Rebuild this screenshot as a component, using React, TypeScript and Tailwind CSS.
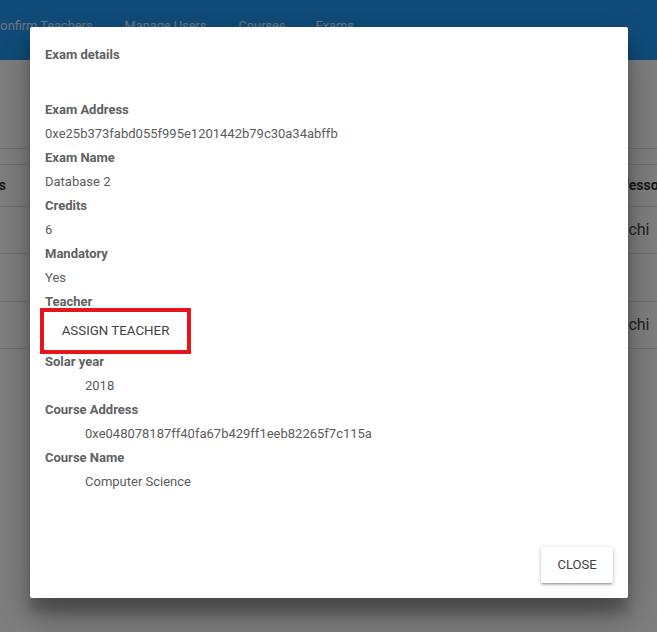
import React from 'react';

const font = { fontFamily: 'Roboto, "Liberation Sans", sans-serif' };

const rows = [
  { label: 'Exam Address', value: '0xe25b373fabd055f995e1201442b79c30a34abffb' },
  { label: 'Exam Name', value: 'Database 2' },
  { label: 'Credits', value: '6' },
  { label: 'Mandatory', value: 'Yes' },
];

const courseRows = [
  { label: 'Solar year', value: '2018' },
  { label: 'Course Address', value: '0xe048078187ff40fa67b429ff1eeb82265f7c115a' },
  { label: 'Course Name', value: 'Computer Science' },
];

const Label: React.FC<{ children: React.ReactNode }> = ({ children }) => (
  <div className="h-[24px] leading-[24px] text-[13px] font-bold text-[#616161]">{children}</div>
);

const Value: React.FC<{ children: React.ReactNode; indent?: boolean }> = ({ children, indent }) => (
  <div className={`h-[24px] leading-[24px] text-[13px] text-[#5c5c5c] ${indent ? 'pl-[40px]' : ''}`}>{children}</div>
);

const App: React.FC = () => {
  return (
    <div className="relative w-[657px] h-[632px] overflow-hidden bg-white" style={font}>
      {/* page behind the dialog */}
      <header className="h-[60px] bg-[#2196f3] flex items-start pt-[16px] text-[12.8px] leading-[20px] text-white/80 whitespace-nowrap">
        <span className="-ml-[8px] mr-[32px]">Confirm Teachers</span>
        <span className="mr-[32px]">Manage Users</span>
        <span className="mr-[30px]">Courses</span>
        <span>Exams</span>
      </header>
      <div className="pt-[88px]">
        <div className="border-t border-[#e0e0e0] h-[16px]" />
        <div className="flex items-center h-[42px] border-t border-[#e0e0e0] text-[14px] font-bold text-[#333]">
          <div className="w-[6px] overflow-hidden flex justify-end shrink-0"><span>Exams</span></div>
          <div className="flex-1" />
          <div className="w-[55px] shrink-0 overflow-hidden whitespace-nowrap">Professor</div>
        </div>
        <div className="flex items-center h-[47px] border-t border-[#e0e0e0] text-[16px] text-[#444]">
          <div className="flex-1" />
          <div className="w-[60px] shrink-0 overflow-hidden whitespace-nowrap">Bianchi</div>
        </div>
        <div className="h-[48px] border-t border-[#e0e0e0]" />
        <div className="flex items-center h-[47px] border-t border-[#e0e0e0] text-[16px] text-[#444]">
          <div className="flex-1" />
          <div className="w-[60px] shrink-0 overflow-hidden whitespace-nowrap">Bianchi</div>
        </div>
        <div className="border-t border-[#e0e0e0]" />
      </div>

      {/* overlay */}
      <div className="absolute inset-0 bg-black/50" />

      {/* dialog */}
      <div className="absolute left-[30px] top-[27px] w-[598px] h-[571px] bg-white rounded-[2px] shadow-[0_19px_38px_rgba(0,0,0,0.3),0_15px_12px_rgba(0,0,0,0.22)] flex flex-col">
        <div className="px-[15px] pt-[16px]">
          <div className="h-[24px] leading-[24px] text-[13px] font-bold text-[#616161]">Exam details</div>
        </div>
        <div className="px-[15px] pt-[31px] flex-1">
          {rows.map((r) => (
            <React.Fragment key={r.label}>
              <Label>{r.label}</Label>
              <Value>{r.value}</Value>
            </React.Fragment>
          ))}
          <div className="h-[22px] leading-[24px] text-[13px] font-bold text-[#616161]">Teacher</div>
          <div className="w-fit -ml-[1px] outline-4 outline-[#e8141c]">
            <button className="block h-[38px] w-[143px] bg-white text-[13.3px] text-[#424242] rounded-[2px] shadow-[0_1px_5px_rgba(0,0,0,0.2),0_2px_2px_rgba(0,0,0,0.14)]">
              ASSIGN TEACHER
            </button>
          </div>
          {courseRows.map((r) => (
            <React.Fragment key={r.label}>
              <Label>{r.label}</Label>
              <Value indent>{r.value}</Value>
            </React.Fragment>
          ))}
        </div>
        <div className="flex justify-end px-[15px] pb-[15px]">
          <button className="h-[36px] w-[72px] bg-white text-[13px] text-[#424242] rounded-[2px] shadow-[0_1px_5px_rgba(0,0,0,0.2),0_2px_2px_rgba(0,0,0,0.14),0_3px_1px_-2px_rgba(0,0,0,0.12)]">
            CLOSE
          </button>
        </div>
      </div>
    </div>
  );
};

export default App;
